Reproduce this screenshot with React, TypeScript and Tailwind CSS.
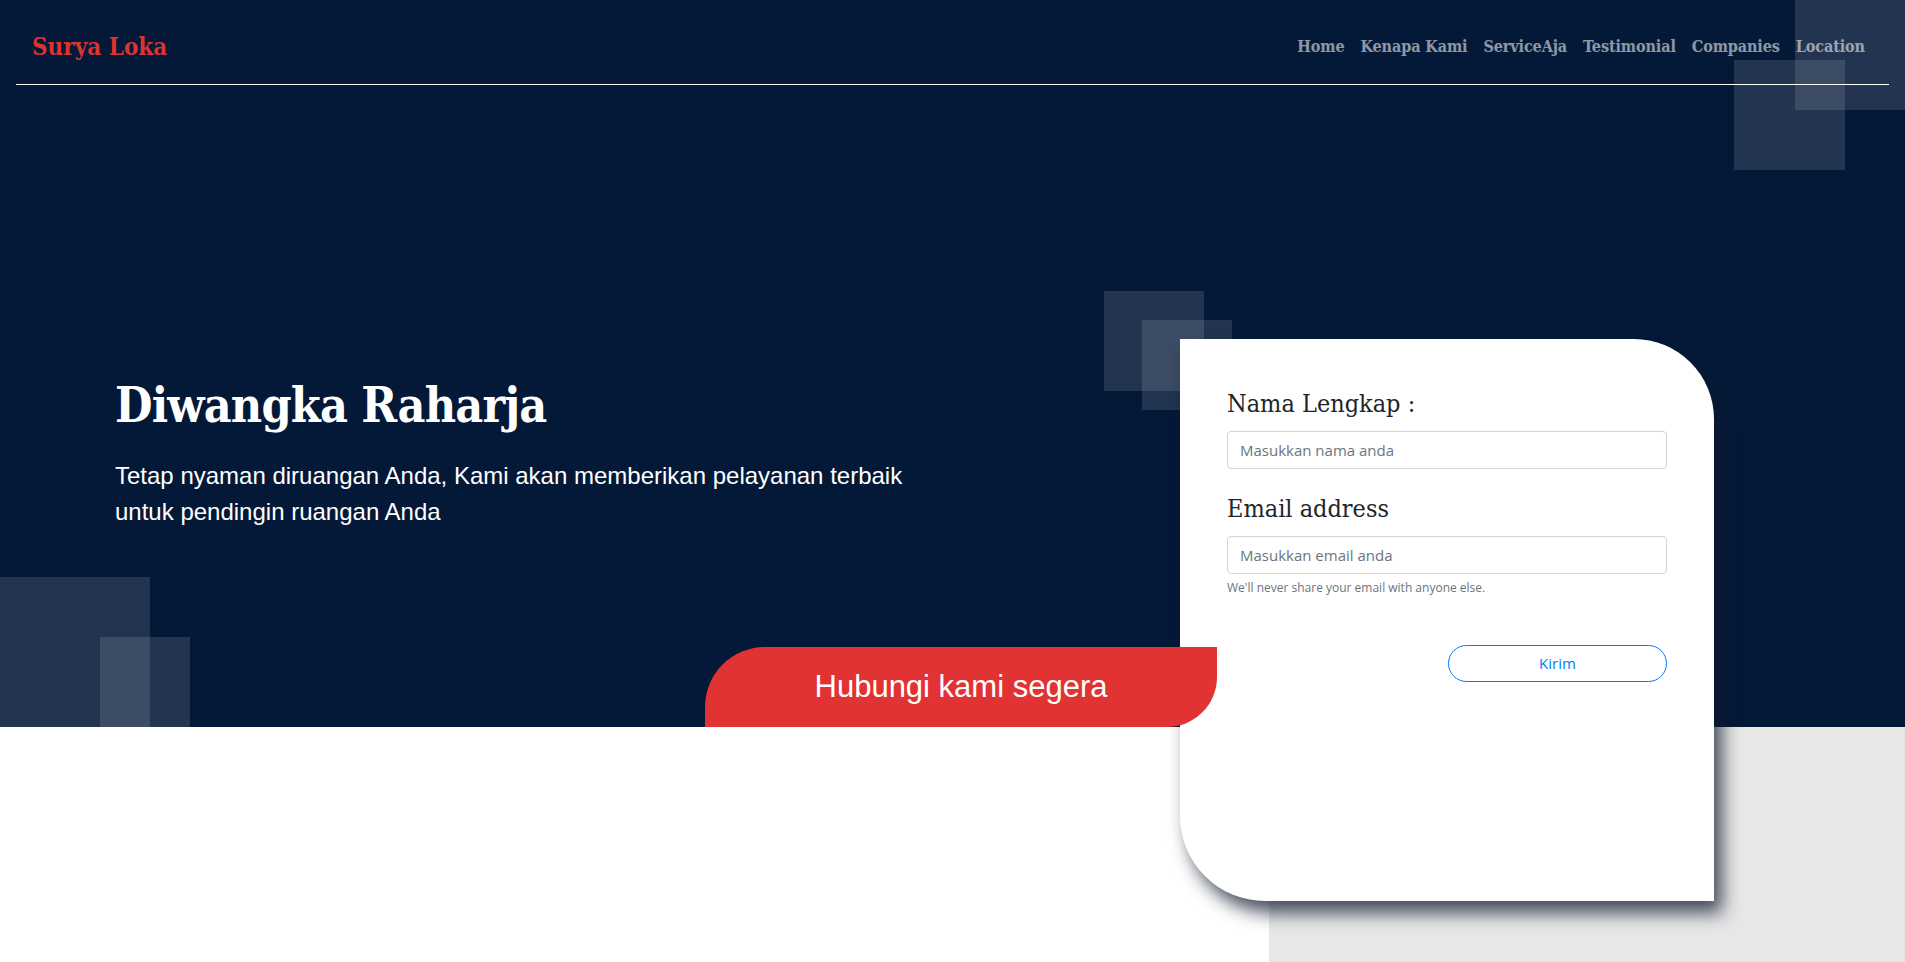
const links = ["Home", "Kenapa Kami", "ServiceAja", "Testimonial", "Companies", "Location"];

const serif = { fontFamily: "'DejaVu Serif Condensed', 'DejaVu Serif', serif" };

function Navbar() {
    return (
        <nav className="relative z-10 mx-4 flex h-[85px] items-center justify-between border-b border-white pt-[10px]">
            <a href="#" className="pl-4 text-[24px] font-bold text-[#dc3232]" style={serif}>
                Surya Loka
            </a>
            <ul className="flex pr-4">
                {links.map((link) => (
                    <li key={link}>
                        <a
                            href="#"
                            className="block px-2 text-[16px] font-bold tracking-[-0.1px] text-white/55"
                            style={serif}
                        >
                            {link}
                        </a>
                    </li>
                ))}
            </ul>
        </nav>
    );
}

function ContactCard() {
    return (
        <form className="relative z-20 mr-[191px] h-[562px] w-[534px] shrink-0 rounded-tr-[80px] rounded-bl-[85px] bg-white px-[47px] pt-[50px] shadow-[8px_12px_18px_rgba(15,25,45,0.75)]">
            <label className="mb-3 block text-[25px] leading-[1.2] text-[#212529]" style={serif}>
                Nama Lengkap :
            </label>
            <input
                type="text"
                placeholder="Masukkan nama anda"
                className="block h-[38px] w-full rounded border border-[#ced4da] px-3 font-['Open_Sans'] text-[15px] text-[#495057] placeholder:text-[#6c757d] outline-none"
            />

            <label className="mt-[25px] mb-3 block text-[25px] leading-[1.2] text-[#212529]" style={serif}>
                Email address
            </label>
            <input
                type="email"
                placeholder="Masukkan email anda"
                className="block h-[38px] w-full rounded border border-[#ced4da] px-3 font-['Open_Sans'] text-[15px] text-[#495057] placeholder:text-[#6c757d] outline-none"
            />
            <small className="mt-[5px] block font-['Open_Sans'] text-[12px] leading-[18px] text-[#6c757d]">
                We'll never share your email with anyone else.
            </small>

            <div className="mt-[48px] flex justify-end">
                <button
                    type="button"
                    className="h-[37px] w-[219px] rounded-full border border-[#007bff] font-['Open_Sans'] text-[15px] text-[#007bff]"
                >
                    Kirim
                </button>
            </div>
        </form>
    );
}

export default function App() {
    return (
        <div className="min-h-[962px] overflow-hidden bg-white">

            {/* HERO */}
            <section className="relative h-[727px] bg-[#041937]">

                {/* decorative squares */}
                <div className="absolute top-0 left-[1795px] h-[110px] w-[110px] bg-white/12" />
                <div className="absolute top-[60px] left-[1734px] h-[110px] w-[111px] bg-white/12" />
                <div className="absolute top-[291px] left-[1104px] h-[100px] w-[100px] bg-white/12" />
                <div className="absolute top-[320px] left-[1142px] h-[90px] w-[90px] bg-white/12" />
                <div className="absolute top-[577px] left-0 h-[150px] w-[150px] bg-white/12" />
                <div className="absolute top-[637px] left-[100px] h-[90px] w-[90px] bg-white/12" />

                <Navbar />

                {/* CONTENT */}
                <div className="flex items-start justify-between pt-[254px] pl-[115px]">
                    <div className="relative z-10 pt-[38px]">
                        <h1
                            className="mb-[23px] text-[48px] leading-[1.2] font-bold tracking-[-0.8px] text-white"
                            style={serif}
                        >
                            Diwangka Raharja
                        </h1>
                        <p className="w-[820px] font-['Liberation_Sans'] text-[24px] leading-[36px] text-white">
                            Tetap nyaman diruangan Anda, Kami akan memberikan pelayanan terbaik untuk pendingin ruangan Anda
                        </p>
                    </div>

                    <ContactCard />
                </div>

                <a
                    href="#"
                    className="absolute bottom-0 left-[705px] z-30 flex h-[80px] w-[512px] items-center justify-center rounded-tl-[60px] rounded-br-[50px] bg-[#e13333] font-['Liberation_Sans'] text-[31px] text-white"
                >
                    Hubungi kami segera
                </a>
            </section>

            {/* NEXT SECTION */}
            <section className="flex h-[235px]">
                <div className="w-[1269px] bg-white" />
                <div className="flex-1 bg-[#e7e7e7]" />
            </section>
        </div>
    );
}
